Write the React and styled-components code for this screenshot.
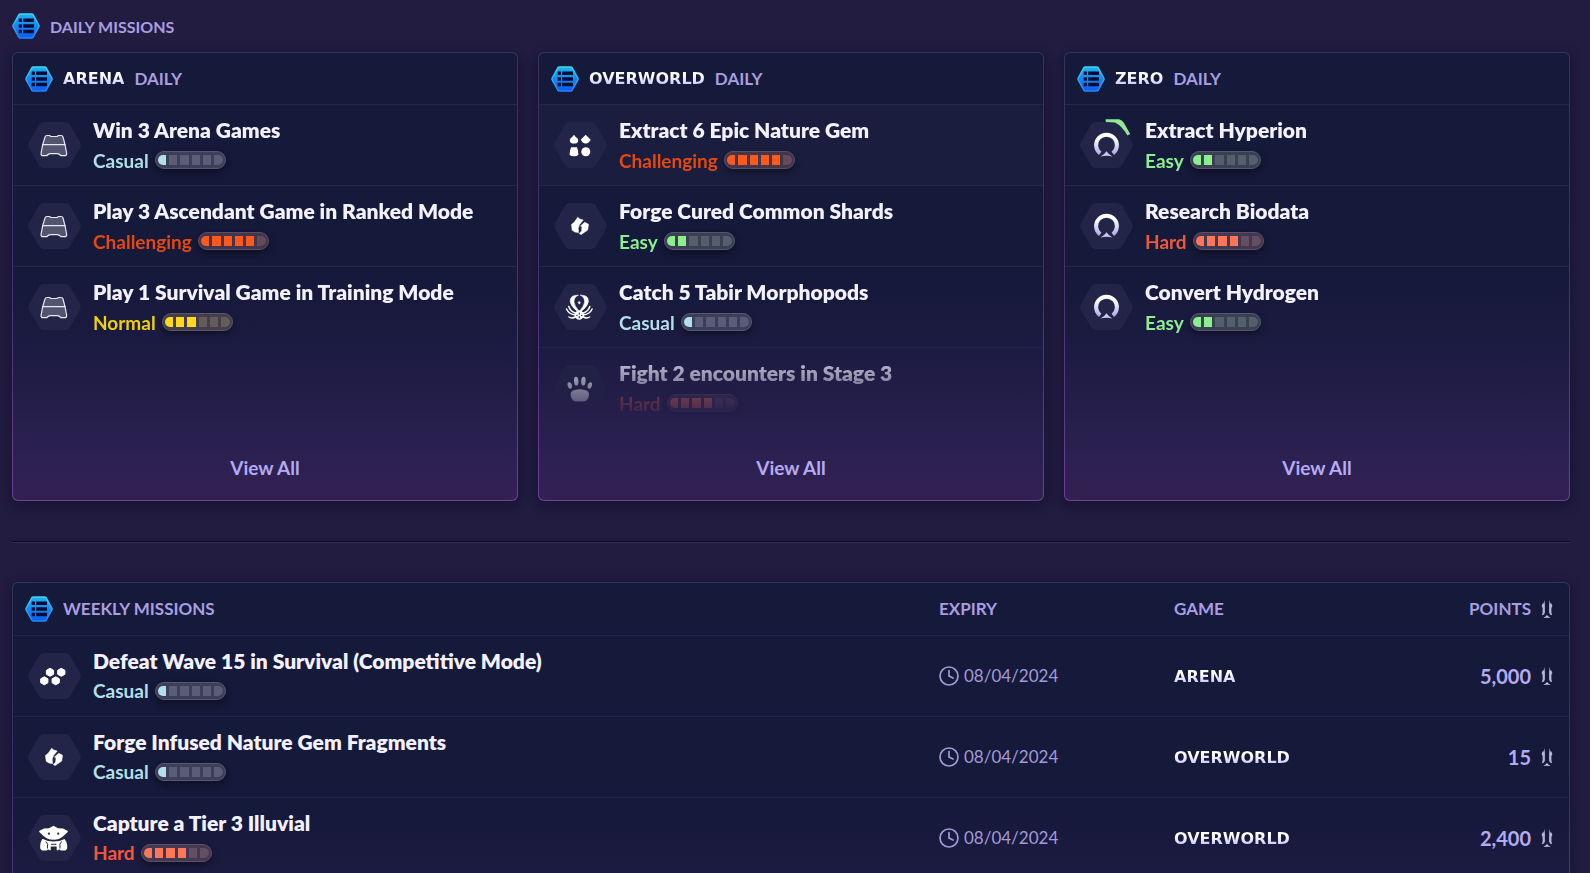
import React from "react";
import styled, { createGlobalStyle } from "styled-components";

const GlobalStyle = createGlobalStyle`
  * {
    box-sizing: border-box;
  }

  body {
    margin: 0;
    background: #211c40;
    color: #f3f1ff;
    font-family: Lato, "Open Sans", sans-serif;
  }
`;

const Page = styled.main`
  padding: 0 20px 40px 12px;
`;

const SectionTitle = styled.h2`
  display: flex;
  align-items: center;
  gap: 10px;
  height: 52px;
  margin: 0;
  color: #a99ee0;
  font-size: 16px;
  font-weight: 700;
  text-transform: uppercase;
`;

const CardGrid = styled.div`
  display: grid;
  grid-template-columns: repeat(3, 1fr);
  gap: 20px;
`;

const Card = styled.section`
  display: flex;
  flex-direction: column;
  min-height: 449px;
  border: 1px solid transparent;
  border-radius: 6px;
  overflow: hidden;
  background: linear-gradient(#15193a 50%, #1d1b43 68%, #2d2152 92%, #322052)
      padding-box,
    linear-gradient(#303659, #3b3163 40%, #6a4496) border-box;
  box-shadow: 0 4px 12px rgba(8, 4, 24, 0.45);
`;

const CardHeader = styled.h3`
  display: flex;
  align-items: center;
  gap: 10px;
  height: 52px;
  margin: 0;
  padding: 0 12px;
  border-bottom: 1px solid #232748;
  color: #a99ee0;
  font-size: 17px;
  font-weight: 700;
  text-transform: uppercase;
`;

const Wordmark = styled.span`
  background: linear-gradient(#ffffff 35%, #b9b6ee);
  background-clip: text;
  color: transparent;
  font-family: "DejaVu Sans", sans-serif;
  font-size: 16px;
  font-weight: 700;
  text-transform: uppercase;
`;

const MissionList = styled.ul`
  height: 330px;
  margin: 0;
  padding: 0;
  overflow: hidden;
  list-style: none;
  mask-image: linear-gradient(#000 235px, transparent 320px);
`;

const MissionItem = styled.li`
  background: ${(props) => (props.$active ? "#1a1d3e" : "transparent")};

  & + & {
    border-top: 1px solid #232748;
  }
`;

const MissionRow = styled.div`
  display: flex;
  align-items: center;
  gap: 12px;
  height: 80px;
  padding: 0 15px;
`;

const Badge = styled.div`
  flex: none;
  width: 53px;
  height: 46px;

  svg {
    display: block;
    overflow: visible;
  }
`;

const MissionName = styled.div`
  font-size: 21px;
  font-weight: 800;
  line-height: 30px;
  white-space: nowrap;
`;

const Difficulty = styled.div`
  display: flex;
  align-items: center;
  gap: 6px;
  height: 30px;
  color: ${(props) => props.$color};
  font-size: 19px;
  font-weight: 700;
`;

const Meter = styled.div`
  display: flex;
  gap: 3px;
  width: 71px;
  height: 18px;
  padding: 3px 2px;
  border: 1px solid color-mix(in srgb, ${(props) => props.$color} 8%, #4e4c68);
  border-radius: 9px;
  background: color-mix(in srgb, ${(props) => props.$color} 6%, #363450);
  box-shadow: 0 3px 6px rgba(0, 0, 0, 0.4);
`;

const Segment = styled.span`
  flex: 1;
  background: ${(props) =>
    props.$on
      ? props.$color
      : `color-mix(in srgb, ${props.$color} 14%, #4b4866)`};

  &:first-child {
    border-radius: 6px 0 0 6px;
  }

  &:last-child {
    border-radius: 0 6px 6px 0;
  }
`;

const CardFooter = styled.div`
  display: flex;
  align-items: center;
  justify-content: center;
  height: 64px;
`;

const ViewAll = styled.button`
  padding: 8px 16px;
  border: 0;
  background: none;
  color: #b5abf2;
  font: inherit;
  font-size: 19px;
  font-weight: 700;
  cursor: pointer;
`;

const Divider = styled.hr`
  height: 2px;
  margin: 40px 0 39px;
  border: 0;
  border-top: 1px solid #0b0722;
  border-bottom: 1px solid #352c59;
`;

const MissionTable = styled.table`
  width: 100%;
  border-collapse: collapse;
  table-layout: fixed;
`;

const HeadCell = styled.th`
  width: ${(props) => props.$width || "auto"};
  height: 52px;
  padding: 0 ${(props) => (props.$first ? "12px" : "16px")};
  border-bottom: 1px solid #20244a;
  color: #a99ee0;
  font-size: 17px;
  font-weight: 700;
  text-align: left;
  text-transform: uppercase;
`;

const Cell = styled.td`
  height: 81px;
  padding: 0 ${(props) => (props.$first ? "0" : "16px")};
  border-bottom: 1px solid #20244a;
`;

const CellRow = styled.div`
  display: flex;
  align-items: center;
  justify-content: ${(props) => (props.$end ? "flex-end" : "flex-start")};
  gap: ${(props) => props.$gap || "10px"};
`;

const Expiry = styled.time`
  color: #a39ad8;
  font-size: 17px;
`;

const Points = styled.span`
  color: #b5abf2;
  font-size: 20px;
  font-weight: 700;
`;

const LEVELS = {
  Casual: { color: "#b3dfe8", fill: 1 },
  Easy: { color: "#8cee8f", fill: 2 },
  Normal: { color: "#ffd91a", fill: 3, text: "#efd00f" },
  Hard: { color: "#ff7658", fill: 4, text: "#f0583c" },
  Challenging: { color: "#ff5a1c", fill: 5, text: "#e2480f" },
};

function ListIcon() {
  return (
    <svg width="28" height="26" viewBox="0 0 28 26" aria-hidden="true">
      <defs>
        <linearGradient id="list-fill" x1="0" y1="0" x2="0" y2="1">
          <stop offset="0" stopColor="#1cb4f5" />
          <stop offset="1" stopColor="#0a5cf5" />
        </linearGradient>
        <linearGradient id="list-edge" x1="0" y1="0" x2="0" y2="1">
          <stop offset="0" stopColor="#45d3e8" />
          <stop offset="1" stopColor="#2484f8" />
        </linearGradient>
      </defs>
      <path
        d="M8.5 1h11q1.2 0 1.8 1l5.5 10q.5 1 0 2l-5.5 10q-.6 1-1.8 1h-11q-1.2 0-1.8-1L1.200 14q-.5-1 0-2L6.700 2q.6-1 1.800-1z"
        fill="url(#list-fill)"
        stroke="url(#list-edge)"
        strokeWidth="1.5"
      />
      <path
        d="M6.700 5.600h3.200v3.500H6.700zM11.200 5.600h10.800v3.500H11.200zM6.700 11.200h3.200v3.500H6.700zM11.200 11.200h10.800v3.500H11.200zM6.700 16.800h3.200v3.500H6.700zM11.200 16.800h10.800v3.500H11.200z"
        fill="#020c30"
      />
    </svg>
  );
}

function Glyph({ name }) {
  switch (name) {
    case "arena":
      return (
        <g stroke="#e9e8f5" strokeWidth="1.2" strokeLinejoin="round" fill="#53556f">
          <path d="M17 15q.4-1.500 2-1.500h2.500l1.500 1h6l1.500-1H33q1.600 0 2 1.500l2 7.700H14.700z" />
          <path d="M14.700 22.700H37l1.600 8.300q.3 2.700-2 2.700h-3.800q-1.300-2-3.800-2h-6.300q-2.500 0-3.800 2h-3.800q-2.300 0-2-2.700z" />
        </g>
      );
    case "gems":
      return (
        <g fill="#fff">
          <path d="M20 12.800l1.800 2.200q2.400 1.200 2.400 3.300 0 3-3 3.300h-2.400q-3-.3-3-3.300 0-2.100 2.400-3.300z" />
          <path d="M31.700 12.800l2 2 3 3-2 2.600-2.200 1.200h-1.600l-2.200-1.200-2-2.600 3-3z" />
          <path d="M17 25.200h6l1 3.500.4 4q-1.400 1.500-4.400 1.500t-4.500-1.500l.5-4z" />
          <circle cx="31.800" cy="29.700" r="4.500" />
        </g>
      );
    case "shards":
      return (
        <g fill="#fff" stroke="#fff" strokeWidth=".6" strokeLinejoin="round">
          <path d="M23.700 14.300l2 1.700 3.500 1-3.700 4.500-1.300 3.500.3 4.500-3.500-.5-2.800-1.800-.7-5.700 3-2.500z" />
          <path d="M30.700 19.300l3.800 2-.8 5.700-6.500 4.500-2-1 2.500-2.500.3-4.500-1.500-.5z" />
        </g>
      );
    case "morphopod":
      return (
        <g fill="none" stroke="#fff" strokeLinecap="round">
          <path
            d="M24 11.200q-8-.5-7.800 6.300.5 5 6.800 9.500l1.500-.5q-4-4.500-4.500-8.500-.3-4.500 4-6.800zM26.600 11.200q8-.5 7.800 6.300-.5 5-6.800 9.500l-1.500-.5q4-4.500 4.500-8.500.3-4.500-4-6.800z"
            fill="#fff"
            strokeWidth=".6"
          />
          <path
            d="M14.800 22.500q1.500 5 7 6.800M35.800 22.500q-1.500 5-7 6.800M12.500 25q2.500 5.500 9 6M38.100 25q-2.500 5.500-9 6M15 33q3 2 7-.5M35.600 33q-3 2-7-.5"
            strokeWidth="1.500"
          />
          <circle cx="25.300" cy="31" r="4.300" fill="#fff" />
          <path d="M25.300 17.200l1.300 1.500-1.300 1.500-1.300-1.500z" fill="#fff" strokeWidth=".3" />
          <path d="M25.300 29v1M25.300 32.700v1M22.800 31.300h.3M27.600 31.300h.3" stroke="#222547" strokeWidth="1.200" />
        </g>
      );
    case "paw":
      return (
        <g fill="#fff">
          <ellipse cx="15.800" cy="20.500" rx="2.100" ry="3.300" transform="rotate(-18 15.800 20.500)" />
          <ellipse cx="22.200" cy="16.200" rx="2.200" ry="4.400" transform="rotate(-5 22.200 16.200)" />
          <ellipse cx="29.400" cy="16.200" rx="2.200" ry="4.400" transform="rotate(5 29.400 16.200)" />
          <ellipse cx="35.800" cy="20.500" rx="2.100" ry="3.300" transform="rotate(18 35.800 20.500)" />
          <path d="M21 25q4.800-1.500 9.600 0 4.400.8 4.400 4.500 0 2.500-1.500 4.700-1.500 2.200-4 2.200h-7.400q-2.500 0-4-2.200-1.500-2.200-1.500-4.700 0-3.700 4.400-4.500z" />
        </g>
      );
    case "zero":
      return (
        <g>
          <path
            d="M20.200 31.300a10.400 10.400 0 1 1 12.600 0"
            fill="none"
            stroke="url(#zero-fill)"
            strokeWidth="4"
          />
          <path d="M26.500 29.300q2 3.200 6 5.200-3-.8-6-.8t-6 .8q4-2 6-5.200z" fill="#c9c8ef" />
        </g>
      );
    case "hive":
      return (
        <g fill="#fff" stroke="#fff" strokeLinejoin="round">
          {[
            [22, 19.300],
            [33.300, 19.300],
            [16.300, 27.800],
            [27.700, 27.800],
          ].map(([x, y]) => (
            <path
              key={`${x}-${y}`}
              transform={`translate(${x} ${y})`}
              d="M0-4L3.600-2V2L0 4-3.600 2V-2z"
            />
          ))}
        </g>
      );
    default:
      return (
        <g>
          <path
            d="M25.500 10.800l4.500 2.400 5 .3 4.500 2.200q.8.800 0 1.600l-3.500 3.200q-4 4.200-10.500 4.200T15 20.500l-3.500-3.200q-.8-.8 0-1.600l4.500-2.200 5-.3z"
            fill="#fff"
          />
          <path
            d="M15 24q4.500 2.500 10.700 2.500T36.500 24q2.700 3 2.700 6.500v3l-1.700 2h-4.800l-1.500-1.300-1.200 1h-1.300v-3.700h-6v3.700h-1.300l-1.200-1-1.500 1.300h-4.800l-1.700-2v-3q0-3.500 2.100-6.500z"
            fill="#fff"
          />
          <g fill="none" stroke="#222547" strokeWidth="1">
            <path d="M18 26.500q2.500 2 1.500 7M33.500 26.500q-2.500 2-1.500 7M23 29.300h5.400" />
          </g>
          <circle cx="21" cy="18.700" r="1.100" fill="#222547" />
          <circle cx="30.200" cy="18.700" r="1.100" fill="#222547" />
        </g>
      );
  }
}

function MissionBadge({ icon, progress }) {
  return (
    <Badge>
      <svg width="53" height="46" viewBox="0 0 53 46" aria-hidden="true">
        <defs>
          <linearGradient id="zero-fill" x1="0" y1="0" x2="0" y2="1">
            <stop offset="0.2" stopColor="#fff" />
            <stop offset="1" stopColor="#b0afe6" />
          </linearGradient>
        </defs>
        <path
          d="M16 0h21q3.500 0 5.200 3l9.800 17q1.700 3 0 6L42.200 43q-1.700 3-5.200 3H16q-3.500 0-5.200-3L1 26q-1.700-3 0-6L10.800 3Q12.500 0 16 0z"
          fill="#222547"
        />
        <Glyph name={icon} />
        {progress && (
          <path
            d="M25.700-2.700H39q3 .5 5 3.700l6.200 11-2.700 1.600Q42 4 35 .6 32 0 25.700 0z"
            fill="#8eea92"
          />
        )}
      </svg>
    </Badge>
  );
}

function PointsIcon() {
  return (
    <svg width="12" height="18" viewBox="0 0 12 18" aria-hidden="true">
      <path
        d="M3.400 0l.5 5v7.500L3 14.500l-2.200.7.800-2.700V8L.6 6l1-2.500h1zM8.600 0l-.5 5v7.500l.9 2 2.200.7-.8-2.700V8l1-2-1-2.500h-1z"
        fill="#b7b5d6"
      />
      <path d="M2.800 17.800Q5 17 6 15.300q1 1.700 3.200 2.500Q6 17 2.800 17.800z" fill="#dddcf0" stroke="#c4c2df" strokeWidth=".4" />
    </svg>
  );
}

function ClockIcon() {
  return (
    <svg
      width="20"
      height="20"
      viewBox="0 0 20 20"
      fill="none"
      stroke="#a39ad8"
      strokeWidth="1.7"
      strokeLinecap="round"
      aria-hidden="true"
    >
      <circle cx="10" cy="10" r="9" />
      <path d="M10 4.500V10l4 2" />
    </svg>
  );
}

function Mission({ name, level, icon, progress }) {
  const { color, fill, text } = LEVELS[level];
  return (
    <MissionRow>
      <MissionBadge icon={icon} progress={progress} />
      <div>
        <MissionName>{name}</MissionName>
        <Difficulty $color={text || color}>
          {level}
          <Meter $color={color} aria-hidden="true">
            {[1, 2, 3, 4, 5, 6].map((step) => (
              <Segment key={step} $color={color} $on={step <= fill} />
            ))}
          </Meter>
        </Difficulty>
      </div>
    </MissionRow>
  );
}

const daily = [
  {
    game: "Arena",
    missions: [
      { name: "Win 3 Arena Games", level: "Casual", icon: "arena" },
      { name: "Play 3 Ascendant Game in Ranked Mode", level: "Challenging", icon: "arena" },
      { name: "Play 1 Survival Game in Training Mode", level: "Normal", icon: "arena" },
    ],
  },
  {
    game: "Overworld",
    missions: [
      { name: "Extract 6 Epic Nature Gem", level: "Challenging", icon: "gems", active: true },
      { name: "Forge Cured Common Shards", level: "Easy", icon: "shards" },
      { name: "Catch 5 Tabir Morphopods", level: "Casual", icon: "morphopod" },
      { name: "Fight 2 encounters in Stage 3", level: "Hard", icon: "paw" },
    ],
  },
  {
    game: "Zero",
    missions: [
      { name: "Extract Hyperion", level: "Easy", icon: "zero", progress: true },
      { name: "Research Biodata", level: "Hard", icon: "zero" },
      { name: "Convert Hydrogen", level: "Easy", icon: "zero" },
    ],
  },
];

const weekly = [
  {
    name: "Defeat Wave 15 in Survival (Competitive Mode)",
    level: "Casual",
    icon: "hive",
    game: "Arena",
    points: "5,000",
  },
  {
    name: "Forge Infused Nature Gem Fragments",
    level: "Casual",
    icon: "shards",
    game: "Overworld",
    points: "15",
  },
  {
    name: "Capture a Tier 3 Illuvial",
    level: "Hard",
    icon: "creature",
    game: "Overworld",
    points: "2,400",
  },
];

function App() {
  return (
    <>
      <GlobalStyle />
      <Page>
        <SectionTitle>
          <ListIcon />
          Daily Missions
        </SectionTitle>
        <CardGrid>
          {daily.map(({ game, missions }) => (
            <Card key={game}>
              <CardHeader>
                <ListIcon />
                <Wordmark>{game}</Wordmark>
                Daily
              </CardHeader>
              <MissionList>
                {missions.map((mission) => (
                  <MissionItem key={mission.name} $active={mission.active}>
                    <Mission {...mission} />
                  </MissionItem>
                ))}
              </MissionList>
              <CardFooter>
                <ViewAll type="button">View All</ViewAll>
              </CardFooter>
            </Card>
          ))}
        </CardGrid>
        <Divider />
        <Card>
          <MissionTable>
            <thead>
              <tr>
                <HeadCell $first>
                  <CellRow>
                    <ListIcon />
                    Weekly Missions
                  </CellRow>
                </HeadCell>
                <HeadCell $width="235px">Expiry</HeadCell>
                <HeadCell $width="235px">Game</HeadCell>
                <HeadCell $width="176px">
                  <CellRow $end>
                    Points
                    <PointsIcon />
                  </CellRow>
                </HeadCell>
              </tr>
            </thead>
            <tbody>
              {weekly.map(({ game, points, ...mission }) => (
                <tr key={mission.name}>
                  <Cell $first>
                    <Mission {...mission} />
                  </Cell>
                  <Cell>
                    <CellRow $gap="5px">
                      <ClockIcon />
                      <Expiry dateTime="2024-04-08">08/04/2024</Expiry>
                    </CellRow>
                  </Cell>
                  <Cell>
                    <Wordmark>{game}</Wordmark>
                  </Cell>
                  <Cell>
                    <CellRow $end>
                      <Points>{points}</Points>
                      <PointsIcon />
                    </CellRow>
                  </Cell>
                </tr>
              ))}
            </tbody>
          </MissionTable>
        </Card>
      </Page>
    </>
  );
}

export default App;
